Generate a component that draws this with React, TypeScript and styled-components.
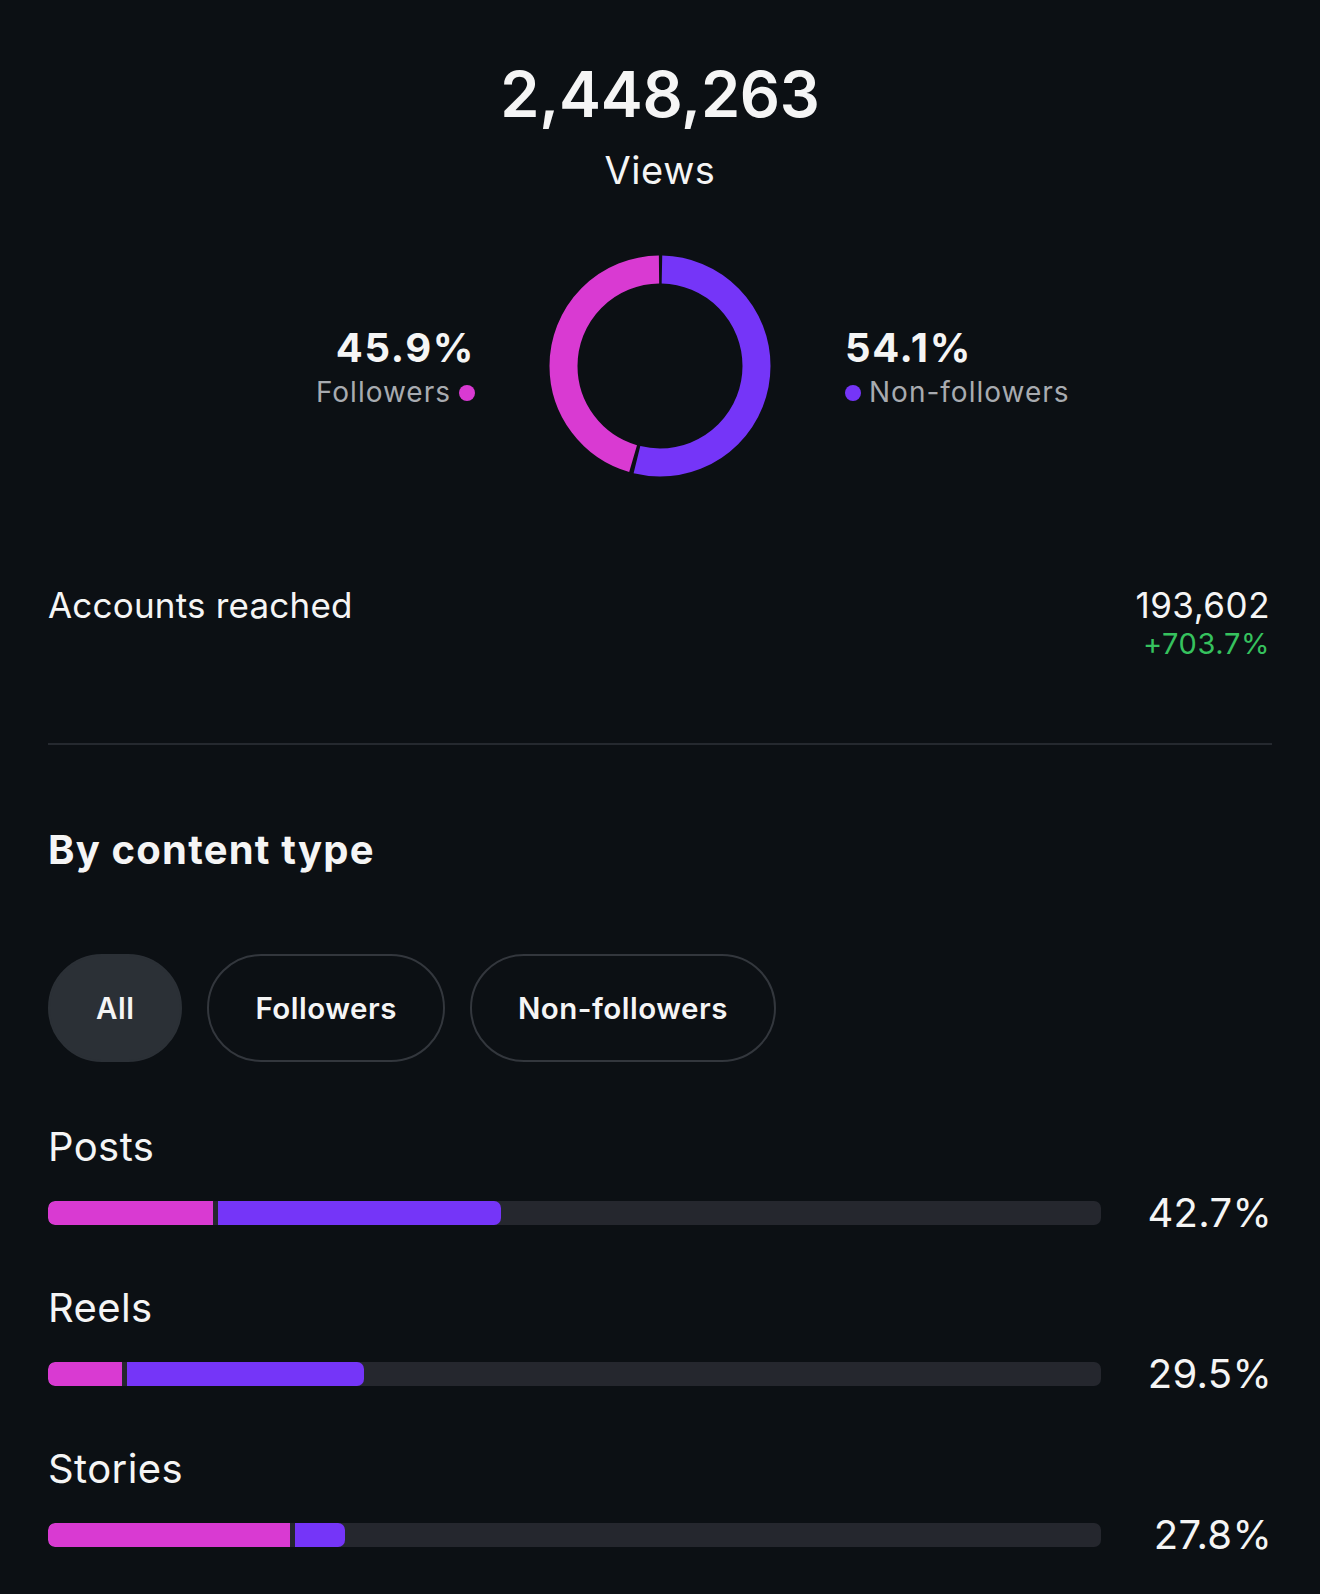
import React from "react";
import styled, { createGlobalStyle } from "styled-components";

const GlobalStyle = createGlobalStyle`
  html, body {
    margin: 0;
    padding: 0;
    background: #0c1014;
  }
  body {
    font-family: Inter, "Noto Sans", "Liberation Sans", sans-serif;
    color: #f5f5f5;
    -webkit-font-smoothing: antialiased;
  }
  * { box-sizing: border-box; }
`;

const PINK = "#d93ad2";
const PURPLE = "#7535f8";

const Page = styled.main`
  min-height: 1594px;
  padding: 57px 48px 40px;
  display: flex;
  flex-direction: column;
`;

const Header = styled.header`
  display: flex;
  flex-direction: column;
  align-items: center;
  gap: 15px;
`;

const BigNumber = styled.div`
  font-size: 63px;
  font-weight: 600;
  line-height: 1.2;
  letter-spacing: -0.3px;
`;

const BigLabel = styled.div`
  font-size: 38px;
  font-weight: 400;
  line-height: 1.2;
  letter-spacing: 0.6px;
`;

const DonutRow = styled.section`
  margin-top: 62px;
  display: grid;
  grid-template-columns: 1fr 222px 1fr;
  column-gap: 74px;
  align-items: center;
`;

const Legend = styled.div<{ $align: "left" | "right" }>`
  display: flex;
  flex-direction: column;
  align-items: ${(p) => (p.$align === "right" ? "flex-end" : "flex-start")};
  gap: 4px;
  margin-top: 2px;
`;

const LegendValue = styled.div`
  font-size: 40px;
  font-weight: 700;
  line-height: 1.2;
  letter-spacing: 1.6px;
`;

const LegendLabel = styled.div`
  display: flex;
  align-items: center;
  gap: 8px;
  font-size: 28px;
  line-height: 1.2;
  letter-spacing: 1px;
  color: #a8abb0;
`;

const Dot = styled.span<{ $color: string }>`
  width: 16px;
  height: 16px;
  border-radius: 50%;
  background: ${(p) => p.$color};
  flex: none;
`;

const Donut: React.FC<{ share: number }> = ({ share }) => {
  const size = 222;
  const c = size / 2;
  const r = 96.5;
  const C = 2 * Math.PI * r;
  const g = 4;
  const purple = share * C;
  const pink = C - purple;
  return (
    <svg width={size} height={size} viewBox={`0 0 ${size} ${size}`}>
      <g transform={`rotate(-90 ${c} ${c})`}>
        <circle
          cx={c}
          cy={c}
          r={r}
          fill="none"
          stroke={PURPLE}
          strokeWidth={28}
          strokeDasharray={`${purple - g} ${C}`}
          strokeDashoffset={-g / 2}
        />
        <circle
          cx={c}
          cy={c}
          r={r}
          fill="none"
          stroke={PINK}
          strokeWidth={28}
          strokeDasharray={`${pink - g} ${C}`}
          strokeDashoffset={-(purple + g / 2)}
        />
      </g>
    </svg>
  );
};

const StatRow = styled.section`
  margin-top: 107px;
  display: flex;
  justify-content: space-between;
  align-items: flex-start;
`;

const StatLabel = styled.div`
  font-size: 35px;
  line-height: 1.2;
  letter-spacing: 0.2px;
`;

const StatValues = styled.div`
  display: flex;
  flex-direction: column;
  align-items: flex-end;
  gap: 1px;
  margin-right: 2px;
`;

const StatNumber = styled.div`
  font-size: 35px;
  line-height: 1.2;
  letter-spacing: 0.5px;
`;

const StatChange = styled.div`
  font-size: 29px;
  line-height: 1.2;
  letter-spacing: 0.6px;
  color: #36c25e;
`;

const Divider = styled.hr`
  margin: 81px 0 0;
  border: none;
  height: 2px;
  background: #25292f;
`;

const SectionTitle = styled.h2`
  margin: 81px 0 0;
  font-size: 40px;
  font-weight: 700;
  line-height: 1.2;
  letter-spacing: 1.2px;
`;

const PillBar = styled.div`
  margin-top: 80px;
  display: flex;
  gap: 25px;
`;

const Pill = styled.button<{ $active?: boolean }>`
  height: 108px;
  padding: 0 46px;
  border-radius: 54px;
  border: 2px solid ${(p) => (p.$active ? "#2b3036" : "#33373d")};
  background: ${(p) => (p.$active ? "#2b3036" : "transparent")};
  color: #f5f5f5;
  font-family: inherit;
  font-size: 29.5px;
  font-weight: 600;
  letter-spacing: 0.5px;
  cursor: pointer;
`;

const TypeList = styled.div`
  margin-top: 61px;
  display: flex;
  flex-direction: column;
  gap: 47px;
`;

const TypeItem = styled.div`
  display: flex;
  flex-direction: column;
  gap: 18px;
`;

const TypeLabel = styled.div`
  font-size: 40px;
  line-height: 1.2;
  letter-spacing: 0.4px;
`;

const BarRow = styled.div`
  display: grid;
  grid-template-columns: 1fr 171px;
  align-items: center;
`;

const Track = styled.div`
  height: 24px;
  border-radius: 7px;
  background: #25272e;
  overflow: hidden;
  display: flex;
`;

const Fill = styled.div`
  height: 100%;
  display: flex;
  gap: 5px;
`;

const Segment = styled.div<{ $color: string; $side: "left" | "right" }>`
  height: 100%;
  background: ${(p) => p.$color};
  border-radius: ${(p) => (p.$side === "left" ? "7px 0 0 7px" : "0 7px 7px 0")};
`;

const Percent = styled.div`
  font-size: 40px;
  line-height: 1.2;
  text-align: right;
  letter-spacing: 0.3px;
`;

const types = [
  { label: "Posts", pct: "42.7%", total: 43.02, followers: 15.67 },
  { label: "Reels", pct: "29.5%", total: 30.01, followers: 7.03 },
  { label: "Stories", pct: "27.8%", total: 28.21, followers: 22.98 },
];

export default function App() {
  return (
    <>
      <GlobalStyle />
      <Page>
        <Header>
          <BigNumber>2,448,263</BigNumber>
          <BigLabel>Views</BigLabel>
        </Header>

        <DonutRow>
          <Legend $align="right">
            <LegendValue>45.9%</LegendValue>
            <LegendLabel>
              Followers
              <Dot $color={PINK} />
            </LegendLabel>
          </Legend>
          <Donut share={0.541} />
          <Legend $align="left">
            <LegendValue>54.1%</LegendValue>
            <LegendLabel>
              <Dot $color={PURPLE} />
              Non-followers
            </LegendLabel>
          </Legend>
        </DonutRow>

        <StatRow>
          <StatLabel>Accounts reached</StatLabel>
          <StatValues>
            <StatNumber>193,602</StatNumber>
            <StatChange>+703.7%</StatChange>
          </StatValues>
        </StatRow>

        <Divider />

        <SectionTitle>By content type</SectionTitle>

        <PillBar>
          <Pill $active>All</Pill>
          <Pill>Followers</Pill>
          <Pill>Non-followers</Pill>
        </PillBar>

        <TypeList>
          {types.map((t) => (
            <TypeItem key={t.label}>
              <TypeLabel>{t.label}</TypeLabel>
              <BarRow>
                <Track>
                  <Fill style={{ width: `${t.total}%` }}>
                    <Segment
                      $color={PINK}
                      $side="left"
                      style={{ width: `${(t.followers / t.total) * 100}%` }}
                    />
                    <Segment $color={PURPLE} $side="right" style={{ flex: 1 }} />
                  </Fill>
                </Track>
                <Percent>{t.pct}</Percent>
              </BarRow>
            </TypeItem>
          ))}
        </TypeList>
      </Page>
    </>
  );
}
